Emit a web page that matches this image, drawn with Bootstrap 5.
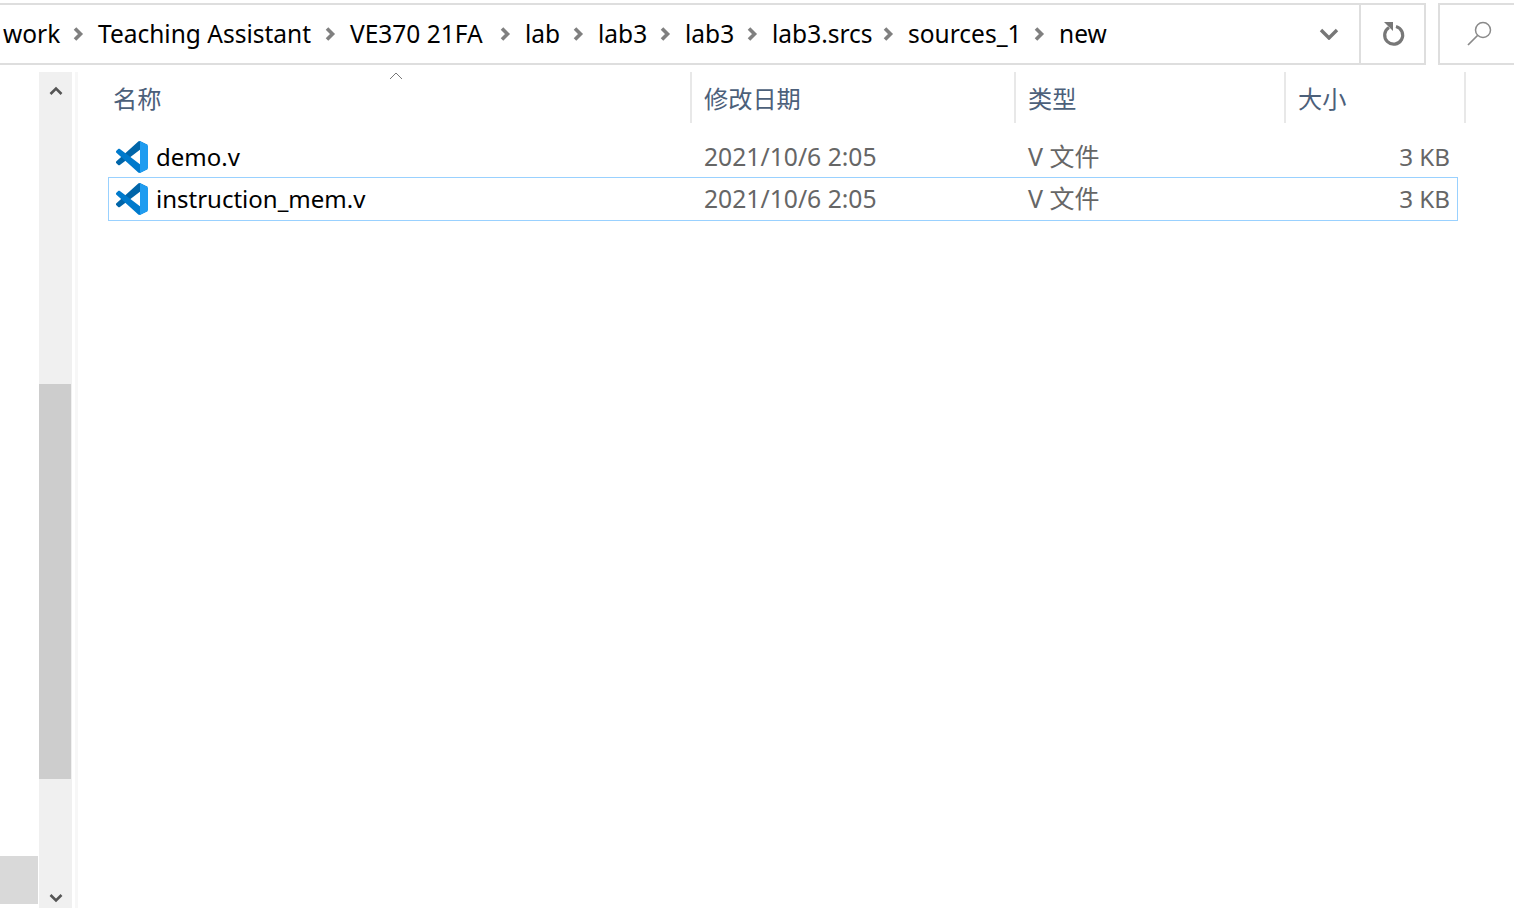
<!DOCTYPE html>
<html lang="zh-CN">

<head>
  <meta charset="UTF-8">
  <title>new</title>
  <link href="https://cdn.jsdelivr.net/npm/bootstrap@5.3.3/dist/css/bootstrap.min.css" rel="stylesheet">
  <script src="https://cdn.jsdelivr.net/npm/bootstrap@5.3.3/dist/js/bootstrap.bundle.min.js"></script>
  <style>
    html, body {
      height: 908px;
      overflow: hidden;
    }

    body {
      font-family: "Noto Sans", "Noto Sans CJK SC", sans-serif;
      font-size: 24.5px;
      background: #fff;
      color: #000;
    }

    .top-strip {
      height: 65px;
      padding-top: 3px;
    }

    .addr-box {
      width: 1426px;
      border: 2px solid #dedede;
      border-left: 0;
    }

    .crumbs {
      padding-left: 3px;
      font-size: 24.5px;
      line-height: 1;
    }

    .crumb-item {
      white-space: nowrap;
    }

    .crumb-sep {
      width: 39px;
    }

    .addr-drop {
      width: 60px;
    }

    .addr-refresh {
      width: 65px;
      padding-left: 2px;
      border-left: 2px solid #dedede;
    }

    .search-box {
      width: 76px;
      margin-left: 12px;
      border: 2px solid #dedede;
      border-right: 0;
    }

    .search-icon {
      margin-left: 26px;
    }

    .main-area {
      height: 843px;
    }

    .tree-pane {
      width: 39px;
      padding-bottom: 4px;
    }

    .tree-sel {
      width: 38px;
      height: 48px;
      background: #d9d9d9;
    }

    .scroll-bar {
      width: 33px;
      margin-top: 7px;
      background: #f0f0f0;
    }

    .scroll-up {
      height: 312px;
      padding-top: 14px;
    }

    .scroll-thumb {
      height: 395px;
      width: 32px;
      background: #cdcdcd;
    }

    .scroll-down {
      padding-bottom: 5px;
    }

    .pane-edge {
      width: 3px;
      margin: 7px 3px 0 3px;
      background: #f7f7f7;
    }

    .file-pane {
      width: 1433px;
      padding-top: 7px;
      position: relative;
    }

    .head-row {
      height: 51px;
      margin-left: 27px;
      font-size: 24.2px;
      color: #4c607a;
    }

    .head-cell {
      border-right: 2px solid #e8e8e8;
      padding-left: 12px;
      line-height: 54px;
    }

    .col-name { width: 584px; padding-left: 5px; }
    .col-date { width: 324px; }
    .col-type { width: 270px; }
    .col-size { width: 180px; }

    .sort-mark {
      position: absolute;
      left: 308px;
      top: 7px;
    }

    .file-list {
      margin-top: 14px;
      margin-left: 27px;
      width: 1350px;
    }

    .file-row {
      height: 44px;
      margin-top: -2px;
      border: 1px solid transparent;
      color: #666;
    }

    .file-row.is-selected {
      border-color: #99d1ff;
    }

    .file-name {
      width: 583px;
      padding-left: 7px;
      gap: 8px;
      font-size: 24px;
      color: #000;
    }

    .file-date { width: 324px; padding-left: 12px; font-size: 24.7px; }
    .file-type { width: 270px; padding-left: 12px; font-size: 25px; }
    .file-size { width: 171px; text-align: right; padding-right: 7px; font-size: 24.2px; }
  </style>
</head>

<body>
  <div class="top-strip d-flex">
    <div class="addr-box d-flex align-items-center">
      <div class="crumbs d-flex align-items-center flex-grow-1" id="crumbs"></div>
      <div class="addr-drop d-flex align-items-center justify-content-center">
        <svg width="20" height="12" viewBox="0 0 20 12"><path d="M2 2l8 8 8-8" fill="none" stroke="#777" stroke-width="3.4"/></svg>
      </div>
      <div class="addr-refresh h-100 d-flex align-items-center justify-content-center">
        <svg width="24" height="26" viewBox="0 0 24 26"><path d="M7 6.5A9 9 0 1 0 14 5.5" fill="none" stroke="#777" stroke-width="3.2"/><path d="M2 1h9v9z" fill="#777"/></svg>
      </div>
    </div>
    <div class="search-box d-flex align-items-center">
      <svg class="search-icon" width="28" height="28" viewBox="0 0 28 28"><circle cx="17" cy="10" r="7.5" fill="none" stroke="#8a8a8a" stroke-width="1.5"/><path d="M11.5 15.5L2 25" stroke="#8a8a8a" stroke-width="1.7"/></svg>
    </div>
  </div>

  <div class="main-area d-flex">
    <div class="tree-pane d-flex flex-column justify-content-end">
      <div class="tree-sel"></div>
    </div>

    <div class="scroll-bar d-flex flex-column">
      <div class="scroll-up text-center lh-1">
        <svg class="d-block mx-auto" width="14" height="10" viewBox="0 0 14 10"><path d="M1.5 8L7 2.5 12.5 8" fill="none" stroke="#555" stroke-width="2.6"/></svg>
      </div>
      <div class="scroll-thumb"></div>
      <div class="scroll-down flex-grow-1 d-flex align-items-end">
        <svg class="d-block mx-auto" width="14" height="10" viewBox="0 0 14 10"><path d="M1.5 2L7 7.5 12.5 2" fill="none" stroke="#555" stroke-width="2.6"/></svg>
      </div>
    </div>

    <div class="pane-edge"></div>

    <div class="file-pane">
      <svg class="sort-mark" width="14" height="8" viewBox="0 0 14 8"><path d="M1 7l6-6 6 6" fill="none" stroke="#777" stroke-width="1"/></svg>
      <div class="head-row d-flex">
        <div class="head-cell col-name">名称</div>
        <div class="head-cell col-date">修改日期</div>
        <div class="head-cell col-type">类型</div>
        <div class="head-cell col-size">大小</div>
      </div>
      <div class="file-list" id="fileList"></div>
    </div>
  </div>

  <svg width="0" height="0" class="position-absolute">
    <defs>
      <symbol id="vscode" viewBox="0 0 100 100">
        <path d="M96.46 10.8L75.86.88C73.47-.27 70.62.21 68.75 2.08L1.3 63.58c-1.81 1.66-1.81 4.51 0 6.17l5.51 5c1.49 1.35 3.72 1.45 5.32.24L93.36 13.37C96.09 11.3 100 13.25 100 16.67v-.24c0-2.4-1.38-4.59-3.54-5.63z" fill="#0065a9"/>
        <path d="M96.46 89.2L75.86 99.12c-2.39 1.15-5.24.67-7.11-1.2L1.3 36.42c-1.81-1.66-1.81-4.51 0-6.17l5.51-5c1.49-1.35 3.72-1.45 5.32-.24L93.36 86.63c2.73 2.07 6.64.12 6.64-3.3v.24c0 2.4-1.38 4.59-3.54 5.63z" fill="#007acc"/>
        <path d="M75.86 99.13c-2.39 1.15-5.24.66-7.11-1.21 2.31 2.3 6.25.67 6.25-2.59V4.67c0-3.26-3.94-4.89-6.25-2.59C70.62.21 73.47-.27 75.86.87L96.46 10.78c2.16 1.04 3.54 3.23 3.54 5.63v67.18c0 2.4-1.38 4.59-3.54 5.63z" fill="#1f9cf0"/>
      </symbol>
    </defs>
  </svg>

  <script>
    // breadcrumb, widths measured per segment
    const parts = [
      ['work', 56], ['Teaching Assistant', 213], ['VE370 21FA', 136], ['lab', 34], ['lab3', 48],
      ['lab3', 48], ['lab3.srcs', 97], ['sources_1', 112], ['new', 48]
    ];
    const sep = '<span class="crumb-sep d-flex justify-content-center"><svg width="11" height="16" viewBox="0 0 11 16"><path d="M2 2.5L7.5 8 2 13.5" fill="none" stroke="#808080" stroke-width="3.6"/></svg></span>';
    document.getElementById('crumbs').innerHTML = parts
      .map(p => `<span class="crumb-item" style="width:${p[1]}px">${p[0]}</span>`)
      .join(sep);

    // file rows
    const files = [
      { name: 'demo.v', sel: false },
      { name: 'instruction_mem.v', sel: true }
    ];
    document.getElementById('fileList').innerHTML = files.map(f => `
      <div class="file-row d-flex align-items-center ${f.sel ? 'is-selected' : ''}">
        <div class="file-name d-flex align-items-center">
          <svg width="32" height="32"><use href="#vscode"></use></svg>
          <span>${f.name}</span>
        </div>
        <div class="file-date">2021/10/6 2:05</div>
        <div class="file-type">V 文件</div>
        <div class="file-size">3 KB</div>
      </div>`).join('');
  </script>
</body>

</html>
